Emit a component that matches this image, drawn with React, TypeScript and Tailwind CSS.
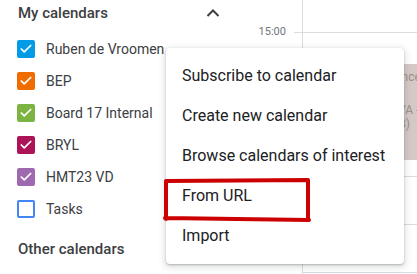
import { Check } from "lucide-react";

type Cal = { name: string; color: string; checked: boolean };

const calendars: Cal[] = [
  { name: "Ruben de Vroomen", color: "bg-[#039be5] border-[#039be5]", checked: true },
  { name: "BEP", color: "bg-[#ef6c00] border-[#ef6c00]", checked: true },
  { name: "Board 17 Internal", color: "bg-[#7cb342] border-[#7cb342]", checked: true },
  { name: "BRYL", color: "bg-[#ad1457] border-[#ad1457]", checked: true },
  { name: "HMT23 VD", color: "bg-[#9e69af] border-[#9e69af]", checked: true },
  { name: "Tasks", color: "bg-white border-[#4285f4]", checked: false },
];

const menuItems = [
  "Subscribe to calendar",
  "Create new calendar",
  "Browse calendars of interest",
  "From URL",
  "Import",
];

const hours = ["15:00", "16:00", "17:00", "18:00", "19:00", "20:00"];

function Chevron() {
  return (
    <svg width="14" height="8" viewBox="0 0 14 8" fill="none">
      <path d="M1.5 7 L7 1.5 L12.5 7" stroke="#3c4043" strokeWidth="2" />
    </svg>
  );
}

export default function App() {
  return (
    <div className="relative flex h-[274px] w-[417px] overflow-hidden bg-white font-['Roboto',sans-serif]">
      {/* sidebar */}
      <aside className="w-[245px] shrink-0">
        <div className="flex h-[26px] items-center justify-between pl-[18px] pr-[25px]">
          <span className="text-[15px] font-medium text-[#3c4043]">My calendars</span>
          <Chevron />
        </div>
        <ul className="mt-[7px] flex flex-col">
          {calendars.map((c) => (
            <li key={c.name} className="flex h-[32px] items-center gap-[11px] pl-[17px]">
              <span
                className={`flex h-[18px] w-[18px] items-center justify-center rounded-[2px] border-2 ${c.color}`}
              >
                {c.checked && <Check className="h-[14px] w-[14px] text-white" strokeWidth={3} />}
              </span>
              <span className="text-[14px] text-[#3c4043]">{c.name}</span>
            </li>
          ))}
        </ul>
        <div className="mt-[13px] pl-[18px] text-[15px] font-medium text-[#3c4043]">
          Other calendars
        </div>
      </aside>

      {/* time gutter */}
      <div className="flex w-[57px] shrink-0 flex-col pt-[25px]">
        {hours.map((h) => (
          <div key={h} className="flex h-[48px] items-start">
            <span className="flex-1 pr-[8px] text-right text-[11px] leading-[14px] text-[#70757a]">
              {h}
            </span>
            <span className="mt-[7px] h-px w-[8px] bg-[#dadce0]" />
          </div>
        ))}
      </div>

      {/* day column */}
      <div className="relative flex-1 border-l border-[#dadce0] pt-[32px]">
        {hours.map((h) => (
          <div key={h} className="h-[48px] border-t border-[#dadce0]" />
        ))}
        <div className="absolute left-[88px] top-[64px] h-[96px] w-[40px] rounded-[4px] bg-[#d5c9c6] pt-[6px] text-[12px] leading-[14px] text-[#998f8c]">
          <div className="pl-[4px]">ance</div>
          <div className="mt-[19px] pl-[7px]">VA -</div>
          <div className="pl-[4px]">(8)</div>
        </div>
      </div>

      {/* menu */}
      <div className="absolute left-[166px] top-[48px] w-[238px] rounded-[4px] bg-white py-[8px] shadow-[0_2px_6px_2px_rgba(60,64,67,0.15),0_1px_2px_rgba(60,64,67,0.3)]">
        {menuItems.map((m) => (
          <div key={m} className="flex h-[40px] items-center pl-[16px] text-[16px] text-[#202124]">
            {m}
          </div>
        ))}
      </div>

      {/* hand-drawn highlight */}
      <svg className="pointer-events-none absolute left-0 top-0" width="417" height="274">
        <path
          d="M166 219 L166 181 L308 180 L308 219 M165 218 L309 220"
          stroke="#cc0000"
          strokeWidth="4"
          fill="none"
          strokeLinecap="round"
          strokeLinejoin="round"
        />
      </svg>
    </div>
  );
}
